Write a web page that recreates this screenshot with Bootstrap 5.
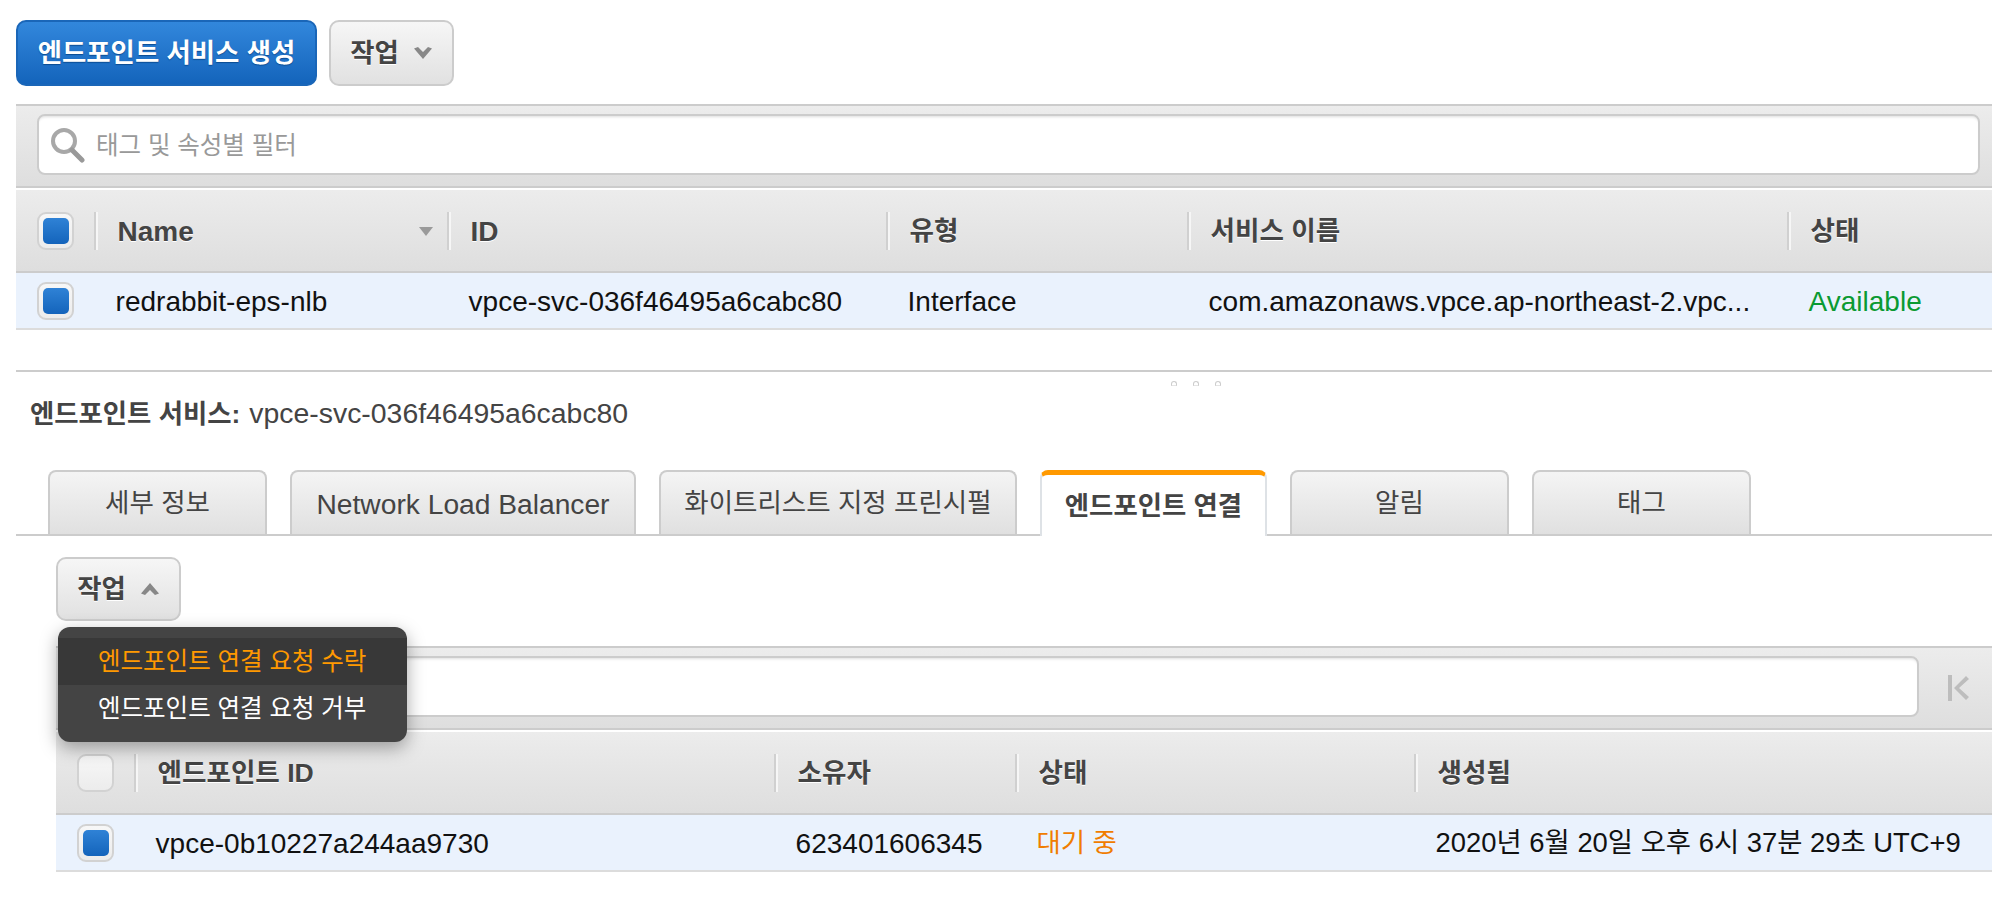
<!DOCTYPE html>
<html lang="ko">
<head>
<meta charset="utf-8">
<title>엔드포인트 서비스</title>
<link href="https://cdn.jsdelivr.net/npm/bootstrap@5.3.0/dist/css/bootstrap.min.css" rel="stylesheet">
<style>
html,body{height:912px;overflow:hidden}
body{background:#fff;font-family:"Liberation Sans","Noto Sans CJK KR",sans-serif;font-size:26px;color:#444;padding:20px 0 0 16px}
.aws-btn{width:125px;height:66px;border-radius:10px;font-size:26.4px;font-weight:700;line-height:1;padding:0;white-space:nowrap;display:inline-flex;align-items:center;justify-content:center;gap:14px;color:#444;border:2px solid #ccc;background:linear-gradient(#f6f6f6,#e1e1e1);text-shadow:0 1px 0 #fff}
.aws-btn:hover,.aws-btn:active{color:#444;border-color:#ccc}
.aws-btn-main{width:301px;color:#fff;border-color:#1a66b8;background:linear-gradient(#3287dc,#1464bb);text-shadow:0 1px 1px #0b4c92}
.aws-btn-main:hover{color:#fff;border-color:#1a66b8}
.aws-btn-small{height:64px}
.aws-bar{height:84px;margin-top:18px;border-top:2px solid #ccc;border-bottom:2px solid #ccc;background:linear-gradient(#ececec,#dedede);padding:8px 12px 10px 21px}
.aws-bar2{padding:8px 0 10px 21px;margin-top:25px}
.aws-search{height:61px;border:2px solid #ccc;border-radius:8px;background:#fff;box-shadow:inset 0 3px 3px -2px #ddd;padding-left:11px;gap:10px;color:#999;font-size:24.5px}
.aws-search span{padding-top:4px}
.aws-head,.aws-row{display:grid;align-items:center}
.aws-head{height:83px;margin-top:2px;border-bottom:2px solid #ccc;background:linear-gradient(#ececec,#dedede);font-weight:700;font-size:26.6px;text-shadow:0 1px 0 #fff}
.aws-lat{font-size:28px}
.aws-row{height:57px;background:#eaf2fd;border-bottom:2px solid #dcdcdc;color:#111;font-size:28px}
.cols-a{grid-template-columns:78px 353px 439px 301px 600px 1fr}
.cols-b{grid-template-columns:78px 640px 241px 399px 1fr}
.aws-head>div{height:38px;display:flex;align-items:center;padding:2px 0 0 21.5px;border-left:2px solid #d0d0d0;box-shadow:inset 2px 0 0 #f6f6f6;position:relative}
.aws-head>div:first-child,.aws-row>div:first-child{border:0;box-shadow:none;padding:0 0 0 21px}
.aws-row>div{padding:2px 0 0 21.6px;line-height:1.2;white-space:nowrap}
.aws-kr{font-size:26.4px}
.aws-date{font-size:27.4px}
.aws-check{width:37px;height:38px;border:2px solid #d2d2d2;border-radius:9px;background:linear-gradient(#f7f7f7,#ececec);display:flex;align-items:center;justify-content:center}
.aws-check-fill::after{content:"";width:26px;height:26px;border-radius:5px;background:linear-gradient(#2f82d6,#1464bb)}
.aws-sort{position:absolute;right:14px;top:15px;width:0;height:0;border-left:7px solid transparent;border-right:7px solid transparent;border-top:9px solid #9a9a9a}
.aws-split{height:20px;margin-top:40px;border-top:2px solid #ccc;position:relative}
.aws-dots{position:absolute;left:1155px;top:9px;display:flex;gap:16px}
.aws-dots i{width:6px;height:5px;border:1px solid #ccc;border-bottom-color:#e4e4e4;border-radius:3px 3px 0 0;display:block}
.aws-title{height:46px;font-size:26.4px;line-height:46px;padding-left:14px;white-space:nowrap}
.aws-title b{margin-right:9px}
.aws-title span{font-size:28.4px}
.aws-tabs{margin-top:34px;padding-left:32px;gap:23px;border-bottom:2px solid #ccc;height:66px;--bs-nav-tabs-border-width:0}
.aws-tabs .nav-link{height:64px;width:219px;padding:2px 0 0;display:flex;align-items:center;justify-content:center;white-space:nowrap;color:#444;font-size:26.5px;border:2px solid #ccc;border-bottom:0;border-radius:8px 8px 0 0;background:linear-gradient(#f4f4f4,#e0e0e0);margin:0}
.aws-tabs .nav-link.aws-tab-lat{width:346px;font-size:28.2px}
.aws-tabs .nav-link.aws-tab-long{width:358px}
.aws-tabs .nav-link.active{height:66px;width:227px;font-weight:700;font-size:26.4px;color:#444;background:#fff;border-top:5px solid #f90;position:relative}
.aws-panel{padding:21px 0 0 40px;position:relative}
.aws-menu{left:42px;top:91px;margin:0;width:349px;height:115px;padding:11px 0 0;background:#444;border:0;border-radius:12px;box-shadow:0 6px 18px rgba(0,0,0,.35);z-index:5;overflow:hidden}
.aws-menu .dropdown-item{height:47px;line-height:47px;padding:0 0 0 40px;color:#fff;font-size:24.5px;white-space:nowrap}
.aws-menu .aws-hot{background:#383838;color:#f90}
.aws-ok{color:#0a9a32}
.aws-wait{color:#f07d00}
.aws-pager{width:73px;flex:none;display:flex;justify-content:center;padding:2px 0 0 4px}
</style>
</head>
<body>
<div class="d-flex gap-2">
  <button type="button" class="btn aws-btn aws-btn-main">엔드포인트 서비스 생성</button>
  <button type="button" class="btn aws-btn ms-1">작업
    <svg width="20" height="14" viewBox="0 0 20 14"><path d="M1 2.5l4-1.5 5 5 5-5 4 1.5L10 13z" fill="#888"/></svg>
  </button>
</div>
<div class="aws-bar">
  <div class="aws-search d-flex align-items-center">
    <svg width="36" height="36" viewBox="0 0 36 36"><circle cx="14" cy="14" r="11" fill="#fff" stroke="#a8a8a8" stroke-width="4"/><path d="M22 23l10 10" stroke="#999" stroke-width="5" stroke-linecap="round"/></svg>
    <span>태그 및 속성별 필터</span>
  </div>
</div>
<div class="aws-head cols-a">
  <div><span class="aws-check aws-check-fill"></span></div>
  <div class="aws-lat">Name<span class="aws-sort"></span></div>
  <div class="aws-lat">ID</div>
  <div>유형</div>
  <div>서비스 이름</div>
  <div>상태</div>
</div>
<div class="aws-row cols-a">
  <div><span class="aws-check aws-check-fill"></span></div>
  <div>redrabbit-eps-nlb</div>
  <div>vpce-svc-036f46495a6cabc80</div>
  <div>Interface</div>
  <div>com.amazonaws.vpce.ap-northeast-2.vpc...</div>
  <div class="aws-ok">Available</div>
</div>
<div class="aws-split"><div class="aws-dots"><i></i><i></i><i></i></div></div>
<div class="aws-title"><b>엔드포인트 서비스:</b><span>vpce-svc-036f46495a6cabc80</span></div>
<ul class="nav nav-tabs aws-tabs">
  <li class="nav-item"><a class="nav-link" href="#">세부 정보</a></li>
  <li class="nav-item"><a class="nav-link aws-tab-lat" href="#">Network Load Balancer</a></li>
  <li class="nav-item"><a class="nav-link aws-tab-long" href="#">화이트리스트 지정 프린시펄</a></li>
  <li class="nav-item"><a class="nav-link active" href="#">엔드포인트 연결</a></li>
  <li class="nav-item"><a class="nav-link" href="#">알림</a></li>
  <li class="nav-item"><a class="nav-link" href="#">태그</a></li>
</ul>
<div class="aws-panel">
  <div class="dropdown">
    <button type="button" class="btn aws-btn aws-btn-small">작업
      <svg width="20" height="14" viewBox="0 0 20 14"><path d="M1 11.5l4 1.5 5-5 5 5 4-1.5L10 1z" fill="#888"/></svg>
    </button>
  </div>
  <div class="dropdown-menu show aws-menu">
    <a class="dropdown-item aws-hot" href="#">엔드포인트 연결 요청 수락</a>
    <a class="dropdown-item" href="#">엔드포인트 연결 요청 거부</a>
  </div>
  <div class="aws-bar aws-bar2 d-flex">
    <div class="aws-search flex-grow-1"></div>
    <div class="aws-pager align-self-center">
      <svg width="24" height="28" viewBox="0 0 24 28"><path d="M2 1h4v26H2zM20 2l3 3-10 9 10 9-3 3L8 14z" fill="#bdbdbd"/></svg>
    </div>
  </div>
  <div class="aws-head cols-b">
    <div><span class="aws-check"></span></div>
    <div>엔드포인트 ID</div>
    <div>소유자</div>
    <div>상태</div>
    <div>생성됨</div>
  </div>
  <div class="aws-row cols-b">
    <div><span class="aws-check aws-check-fill"></span></div>
    <div>vpce-0b10227a244aa9730</div>
    <div>623401606345</div>
    <div class="aws-wait aws-kr">대기 중</div>
    <div class="aws-date">2020년 6월 20일 오후 6시 37분 29초 UTC+9</div>
  </div>
</div>
<script src="https://cdn.jsdelivr.net/npm/bootstrap@5.3.0/dist/js/bootstrap.bundle.min.js"></script>
</body>
</html>
